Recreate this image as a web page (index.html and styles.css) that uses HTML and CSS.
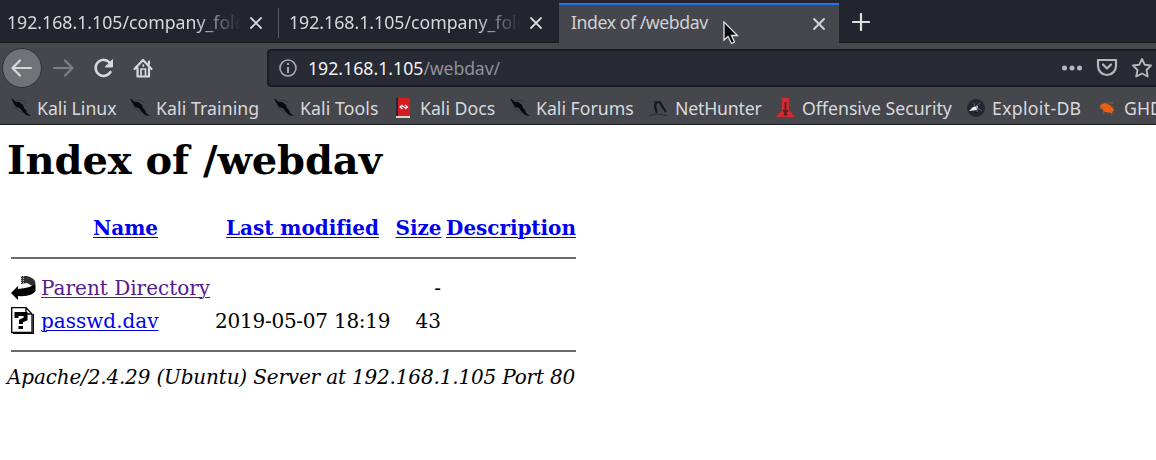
FILE: index.html
```html
<!DOCTYPE html>
<html lang="en"><head><meta charset="utf-8"><title>Index of /webdav</title><link rel="stylesheet" href="styles.css"></head>
<body>
<svg class="defs" width="0" height="0"><defs>
<symbol id="x" viewBox="0 0 14 14"><path d="M2 2 12 12M12 2 2 12" stroke="#d4d4d6" stroke-width="1.9" stroke-linecap="round"/></symbol>
<symbol id="kali" viewBox="0 0 22 20"><path d="M0 0 5 4 8 4 12 7 13 10 15 12 16 15 20 18 15 17 11 13 9 10 5 9 3 6Z" fill="#08090b"/><path d="M5 3 11 2 15 5M3 9 8 12 11 15" fill="none" stroke="#303136" stroke-width=".7"/></symbol>
</defs></svg>
<header class="tabs">
<div class="tab first"><span class="title fade">192.168.1.105/company_fold</span><svg class="close"><use href="#x"/></svg></div>
<div class="tab second"><span class="title fade">192.168.1.105/company_fold</span><svg class="close"><use href="#x"/></svg></div>
<div class="tab active"><span class="title">Index of /webdav</span><svg class="close"><use href="#x"/></svg></div>
<svg class="plus" viewBox="0 0 18 18"><path d="M9 1V17M1 9H17" stroke="#dededf" stroke-width="2.2" stroke-linecap="round"/></svg>
</header>
<nav class="toolbar">
<svg class="navicons" viewBox="0 0 160 46" fill="none" stroke="#d8d8d9" stroke-width="2.2" stroke-linecap="round" stroke-linejoin="round">
<circle cx="22" cy="22" r="19.5" fill="#717276" stroke="#303136" stroke-width="1"/><path d="M31 22H13M20 14.5 12.5 22 20 29.500"/>
<path d="M54 22H72M65 14.500 72.500 22 65 29.500" stroke="#7d7e82"/>
<path d="M110.500 26A8 8 0 1 1 110 17" stroke-width="2.500"/><path d="M112.500 14V21H105.500Z" fill="#d8d8d9" stroke-width="1"/>
<path d="M134.500 23 143 14 151.500 23M137.500 22V30.500H149V22M149 18V15.500" stroke-width="2.200"/><path d="M141 30V23H145.500V30M143.300 19V20" stroke-width="1.700"/>
</svg>
<div class="url">
<svg class="info" viewBox="0 0 20 20" fill="none" stroke="#a7a8ad" stroke-width="1.600"><circle cx="10" cy="10" r="8"/><path d="M10 9V15M10 5V7" stroke-width="2"/></svg>
<span class="address"><b>192.168.1.105</b>/webdav/</span>
<svg class="actions" viewBox="0 0 96 32" fill="none" stroke="#b7b8bc" stroke-width="2.200" stroke-linejoin="round" stroke-linecap="round"><g fill="#b7b8bc" stroke="none"><circle cx="4.500" cy="16" r="2.500"/><circle cx="12" cy="16" r="2.500"/><circle cx="19.500" cy="16" r="2.500"/></g><path d="M38 8H56V14A9 9 0 0 1 38 14ZM43 12.500 47 16.500 51 12.500"/><path d="M82 7 84.700 12.700 91 13.500 86.500 18 87.700 24.500 82 21.500 76.300 24.500 77.500 18 73 13.500 79.300 12.700Z" stroke-width="1.900"/></svg>
</div>
</nav>
<nav class="bookmarks">
<a class="b1"><svg><use href="#kali"/></svg><span>Kali Linux</span></a>
<a class="b2"><svg><use href="#kali"/></svg><span>Kali Training</span></a>
<a class="b3"><svg><use href="#kali"/></svg><span>Kali Tools</span></a>
<a class="b4"><svg viewBox="0 0 22 20"><path d="M2 0H5V18H2Z" fill="#20263c"/><path d="M4 0H16V18H4Z" fill="#d51c20"/><path d="M2 18H16V20H2Z" fill="#ddd0cf"/><path d="M8.500 7 6 9 8.500 11M11 7 13.500 9 11 11M8 8 12 10" fill="none" stroke="#fff" stroke-width="1.200"/></svg><span>Kali Docs</span></a>
<a class="b5"><svg><use href="#kali"/></svg><span>Kali Forums</span></a>
<a class="b6"><svg viewBox="0 0 22 20"><path d="M7 15C9 13 4 9 7 5Q11 2 13 8L17 14" fill="none" stroke="#17181b" stroke-width="2.200"/><path d="M0 18Q8 14 18 18M4 4 7 3" fill="none" stroke="#292a2e" stroke-width="1"/></svg><span>NetHunter</span></a>
<a class="b7"><svg viewBox="0 0 22 20"><path d="M6 0H13V12L19 19H0L6 12Z" fill="#d32c30"/><path d="M9.500 4V18M7 12 11 17M12 12 8 17" stroke="#641b20" stroke-width="1.800"/></svg><span>Offensive Security</span></a>
<a class="b8"><svg viewBox="0 0 22 20"><circle cx="10" cy="10" r="9" fill="#242733"/><path d="M3 13 7 9 12 8 11 12Z" fill="#f0f0f0"/><path d="M10 8 14 5M10 9 16 13M9 9 8 5M11 10 11 14" stroke="#74767e" stroke-width=".8"/></svg><span>Exploit-DB</span></a>
<a class="b9"><svg viewBox="0 0 22 20"><path d="M2 7 7 5 12 7 16 12 14 15 7 14 3 10Z" fill="#ee6412"/><path d="M4 4 6 16M1 10 16 9M9 4 14 17M11 5 15 5" stroke="#cf5b1a" stroke-width=".7"/></svg><span>GHDB</span></a>
</nav>
<main>
<h1>Index of /webdav</h1>
<div class="listing">
<div class="row head"><i></i><a>Name</a><a>Last modified</a><a>Size</a><a>Description</a></div>
<div class="rule"></div>
<div class="row"><svg viewBox="0 0 26 27"><path d="M10 2H16Q24 4 24.500 9L23 13 16 9 10 10Z" fill="#303030"/><path d="M10.500 2V10M12.500 2V10" stroke="#bbb" stroke-dasharray="1 1"/><path d="M0 19 7 12V15Q19 14 24.500 10V17Q21 23 7 22V26Z" fill="#000"/></svg><a class="visited">Parent Directory</a><span></span><span class="num">-</span></div>
<div class="row file"><svg viewBox="0 0 26 27"><path d="M.7.7H15L21 7V25.500H.7Z" fill="#fff" stroke="#000" stroke-width="1.300"/><path d="M15 1V7H21M2 26.500H22.300V7" fill="none" stroke="#000" stroke-width="1.300"/><path d="M5.500 11V7H14.500V12L10 14V17" fill="none" stroke="#000" stroke-width="4"/><path d="M7.500 19H12V22H7.500Z"/></svg><a>passwd.dav</a><span class="date">2019-05-07 18:19</span><span class="num">43</span></div>
<div class="rule"></div>
</div>
<address class="server">Apache/2.4.29 (Ubuntu) Server at 192.168.1.105 Port 80</address>
</main>
<svg class="cursor" viewBox="0 0 18 26"><path d="M2 2V20L6 16.500 9.500 23.500 12.500 22 9.500 15.500H15.500Z" fill="#08090b" stroke="#e5e5e5" stroke-width="1.300"/></svg>
</body></html>
```
FILE: styles.css
```css
*{box-sizing:border-box}
body{margin:0;width:1156px;height:460px;overflow:hidden;position:relative;background:#fff;font-family:"DejaVu Serif",serif}
.defs{position:absolute}
svg{flex:none;display:block}
.tabs,.toolbar,.bookmarks{font-family:"Noto Sans",sans-serif;color:#d8d9dc;white-space:nowrap}
.tabs{height:43px;background:#23252e;display:flex;border-bottom:1px solid #191a20}
.tab{height:43px;display:flex;align-items:center;padding:3px 13px 0 7px;font-size:17.7px}
.tab .title{line-height:34px;padding-bottom:2px;width:234px;overflow:hidden}
.fade{-webkit-mask-image:linear-gradient(90deg,#000 80%,transparent 100%);mask-image:linear-gradient(90deg,#000 80%,transparent 100%)}
.close{width:14px;height:14px;margin-left:8px}
.first{width:278px}
.second{width:281px;padding-left:11px;position:relative}
.second .title{width:232px}
.second::before{content:"";position:absolute;left:0;top:8px;width:1px;height:30px;background:#5b5c63}
.active{width:280px;background:#45474d;border-top:2px solid #2374e8;margin-top:3px;height:40px;padding:0 13px 0 12px;color:#d0d1d3}
.active .title{width:233px;letter-spacing:-.45px;line-height:33px;padding-bottom:3px}
.plus{width:18px;height:18px;margin:13px 0 0 13px}
.toolbar{height:52px;background:#45474d;display:flex;padding-top:3px}
.navicons{width:160px;height:46px}
.url{height:38px;margin:3px 0 0 107px;width:889px;background:#282a34;border:2px solid #1c1d23;border-right:0;border-radius:4px 0 0 4px;display:flex;align-items:center;padding-left:9px}
.info{width:20px;height:20px}
.address{font-size:17.7px;line-height:34px;margin-left:10px;color:#8f9198;flex:1;letter-spacing:-.15px}
.address b{font-weight:400;color:#f1f1f3;letter-spacing:0}
.actions{width:96px;height:32px}
.bookmarks{height:30px;background:#45474d;border-bottom:1px solid #1d1e22;display:flex;font-size:17.7px}
.bookmarks a{display:flex;align-items:center;flex:none;height:26px}
.bookmarks svg{width:22px;height:20px;margin-right:4px}
.b1{width:119px;margin-left:11px}
.b2{width:144px;letter-spacing:.08px}
.b3{width:120px;letter-spacing:.08px}
.b4{width:116px}
.b5{width:139px}
.b6{width:127px;letter-spacing:-.2px}
.b7{width:190px}
.b8{width:132px;letter-spacing:.3px}
main{padding:12px 8px}
h1{font-size:40px;line-height:46px;margin:0 0 0 -1px;letter-spacing:-.1px}
.listing{width:565px;margin:31px 0 0 3px;font-size:20px;line-height:28px}
.row{display:grid;grid-template-columns:26px 169px 180px 43px 130px;column-gap:4px;align-items:center;height:33px;white-space:nowrap}
.row a{color:#00e;text-decoration:underline;text-underline-offset:2px;text-decoration-thickness:1px}
.row .visited{color:#551a8b}
.row svg{width:26px;height:27px}
.row.head{height:28px;font-weight:700;text-align:center;margin-bottom:14px;grid-template-columns:26px 169px 177px 47px 130px}
.head a{letter-spacing:-.05px}
.rule{height:2px;background:#6b6b6b;position:relative;top:.5px}
.rule+.row{margin-top:13px}
.file{margin-bottom:12px}
.date{letter-spacing:-.25px;padding-left:1px}
.num{text-align:right}
.server{font-size:20px;line-height:28px;margin:12px 0 0 -1px;white-space:nowrap;letter-spacing:-.17px}
.cursor{position:absolute;left:722px;top:20px;width:18px;height:26px}
```
